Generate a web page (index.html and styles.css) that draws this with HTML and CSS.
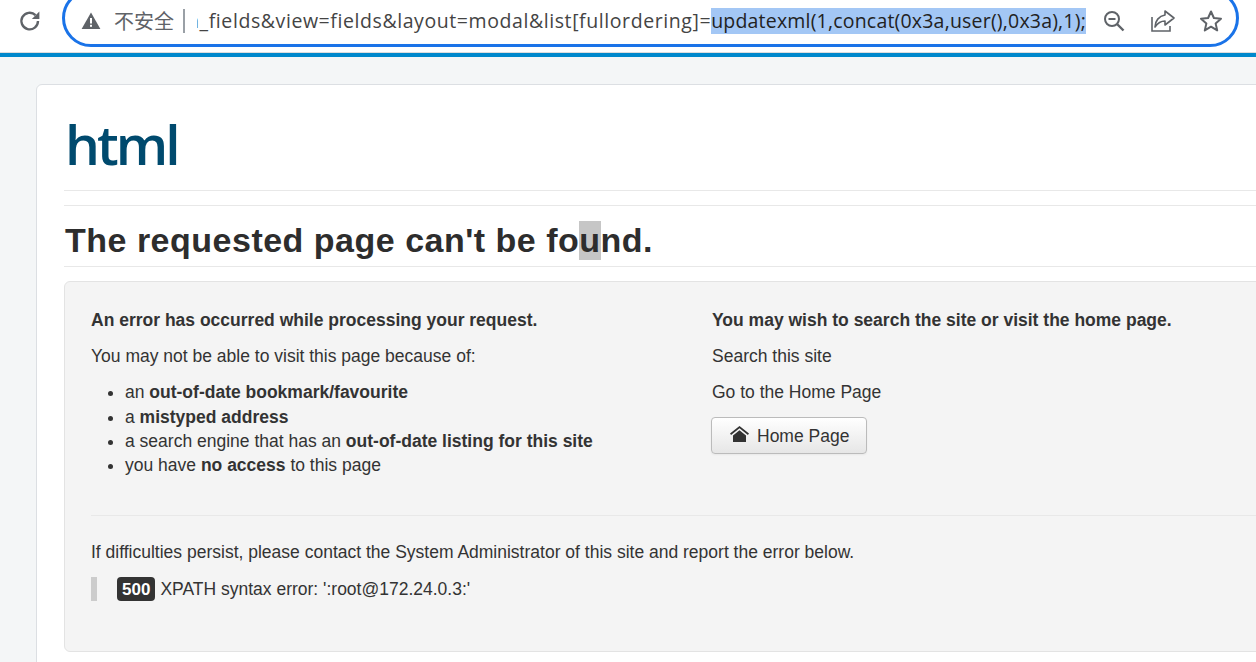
FILE: index.html
```html
<!DOCTYPE html>
<html lang="en">
<head>
<meta charset="utf-8">
<title>Error</title>
<link rel="stylesheet" href="styles.css">
</head>
<body>
<header class="chrome">
  <svg class="reload" width="24" height="24" viewBox="0 0 24 24"><path d="M20 12a8.300 8.300 0 1 1-2.500-5.900" fill="none" stroke="#5f6368" stroke-width="2.400"/><path d="M21.400 2.500v7.500h-7.500z" fill="#5f6368"/></svg>
  <div class="omnibox">
    <svg class="warn" width="20" height="20" viewBox="0 0 20 20"><path d="M10 1.500 19.400 18H.6z" fill="#5f6368"/><rect x="9" y="7" width="2" height="5.500" fill="#fff"/><rect x="9" y="13.800" width="2" height="2" fill="#fff"/></svg>
    <span class="insecure">不安全</span>
    <span class="sep"></span>
    <div class="url"><span class="url-plain">n_fields&amp;view=fields&amp;layout=modal&amp;list[fullordering]=</span><span class="url-sel">updatexml(1,concat(0x3a,user(),0x3a),1);</span></div>
    <svg class="tool zoom-ic" width="24" height="24" viewBox="0 0 24 24"><circle cx="10" cy="10" r="7" fill="none" stroke="#5f6368" stroke-width="2"/><path d="M15 15l6.500 6.500" stroke="#5f6368" stroke-width="2.400"/><path d="M6.500 10h7" stroke="#5f6368" stroke-width="2"/></svg>
    <svg class="tool share-ic" width="26" height="24" viewBox="0 0 26 24"><path d="M2 8v14h18v-5" fill="none" stroke="#5f6368" stroke-width="1.600"/><path d="M15 2l9 7-9 7v-4c-4 0-7 1.500-10 6 0-6 4-11 10-12z" fill="none" stroke="#5f6368" stroke-width="1.600" stroke-linejoin="round"/></svg>
    <svg class="tool star-ic" width="24" height="24" viewBox="0 0 24 24"><path d="M12 2.500l2.900 6.500 7.100.7-5.400 4.700 1.600 7-6.200-3.700-6.200 3.700 1.600-7L2 9.700l7.100-.7z" fill="none" stroke="#5f6368" stroke-width="2" stroke-linejoin="round"/></svg>
  </div>
</header>
<div class="strip"></div>
<main class="card">
  <div class="brand">html</div>
  <hr class="rule brand-rule">
  <hr class="rule top-rule">
  <h1 class="title">The requested page can't be fo<span class="mark">u</span>nd.</h1>
  <section class="well">
    <div class="cols">
      <div class="col">
        <p class="lead">An error has occurred while processing your request.</p>
        <p>You may not be able to visit this page because of:</p>
        <ul class="reasons">
          <li class="first">an <strong>out-of-date bookmark/favourite</strong></li>
          <li>a <strong>mistyped address</strong></li>
          <li>a search engine that has an <strong>out-of-date listing for this site</strong></li>
          <li>you have <strong>no access</strong> to this page</li>
        </ul>
      </div>
      <div class="col">
        <p class="lead">You may wish to search the site or visit the home page.</p>
        <p>Search this site</p>
        <p>Go to the Home Page</p>
        <a class="btn"><svg class="home" width="19" height="16" viewBox="0 0 19 16"><path d="M9.500 0 0 7.600l1.100 1.300 8.400-6.700 8.400 6.700L19 7.600z" fill="#333"/><path d="M3 9.500 9.500 4.300 16 9.500V16H3z" fill="#333"/></svg>Home Page</a>
      </div>
    </div>
    <hr class="rule well-rule">
    <p class="contact">If difficulties persist, please contact the System Administrator of this site and report the error below.</p>
    <blockquote class="quote"><span class="badge">500</span><span>XPATH syntax error: ':root@172.24.0.3:'</span></blockquote>
  </section>
</main>
</body>
</html>
```
FILE: styles.css
```css
* { box-sizing: border-box; }
html, body { margin: 0; height: 662px; overflow: hidden; }
body { background: #f4f6f7; font-family: "Liberation Sans", Arial, sans-serif; font-size: 17.5px; line-height: 24px; color: #333; width: 1256px; }
.chrome { height: 53px; background: #fff; display: flex; align-items: center; padding-left: 18px; overflow: hidden; border-bottom: 1px solid #ddd; }
.reload { flex: none; margin-top: -11px; }
.omnibox { flex: none; width: 1177px; height: 58px; margin-left: 20px; margin-top: -17px; border: 3px solid #1a73e8; border-radius: 29px; background: #fff; display: flex; align-items: center; padding: 7px 0 0 16px; }
.warn { flex: none; }
.insecure { flex: none; margin-left: 13px; font: 20px/24px "Noto Sans CJK SC", sans-serif; color: #5f6368; width: 60px; }
.sep { flex: none; width: 2px; height: 24px; background: #9aa0a6; margin-left: 9px; }
.url { flex: none; width: 889px; margin-left: 12px; white-space: nowrap; font: 19.5px/26px "Open Sans", sans-serif; color: #444; display: flex; justify-content: flex-end; overflow: hidden; }
.url-plain { letter-spacing: .58px; }
.url-sel { background: #a3c7f5; color: #222; letter-spacing: .2px; }
.tool { flex: none; }
.zoom-ic { margin-left: 16px; }
.share-ic { margin-left: 24px; }
.star-ic { margin-left: 23px; }
.strip { height: 4px; background: #0088cc; }
.card { width: 1300px; height: 620px; margin: 27px 0 0 36px; background: #fff; border: 1px solid #dcdfe3; border-radius: 6px; padding: 0 0 0 27px; }
.brand { font: 600 55px/64px "Open Sans", sans-serif; letter-spacing: -3px; color: #004a6e; height: 105px; padding: 27px 0 0 1px; }
.rule { margin: 0; border: 0; border-top: 1px solid #e8e8e8; }
.top-rule { margin-top: 14px; }
.title { margin: 15px 0 0; padding: 0 0 6px 1px; font-size: 34px; line-height: 39px; font-weight: 700; letter-spacing: .5px; color: #2d2d2d; border-bottom: 1px solid #e8e8e8; }
.mark { background: #c6c6c6; display: inline-block; }
.well { margin-top: 14px; height: 371px; background: #f4f4f4; border: 1px solid #e3e3e3; border-radius: 6px; padding: 26px; }
.cols { display: flex; }
.col { flex: none; width: 621px; }
p { margin: 0 0 12px; }
.lead { font-weight: 700; }
.reasons { margin: 0; padding: 0 0 0 34px; }
.first { margin-bottom: 1px; }
.btn { display: inline-flex; align-items: center; height: 37px; width: 156px; padding-left: 18px; margin: 1px 0 0 -1px; border: 1px solid #bbb; border-radius: 4px; background: linear-gradient(#fff, #e6e6e6); box-shadow: 0 1px 2px rgba(0,0,0,.05); }
.home { margin: 0 8px 4px 0; }
.well-rule { margin-top: 38px; }
.contact { margin: 24px 0 13px; }
.quote { margin: 0; height: 24px; border-left: 6px solid #ccc; padding-left: 20px; display: flex; align-items: center; gap: 5px; }
.badge { background: #333; color: #fff; font-size: 17px; font-weight: 700; border-radius: 4px; padding: 0 5px; height: 24px; line-height: 25px; }
```
